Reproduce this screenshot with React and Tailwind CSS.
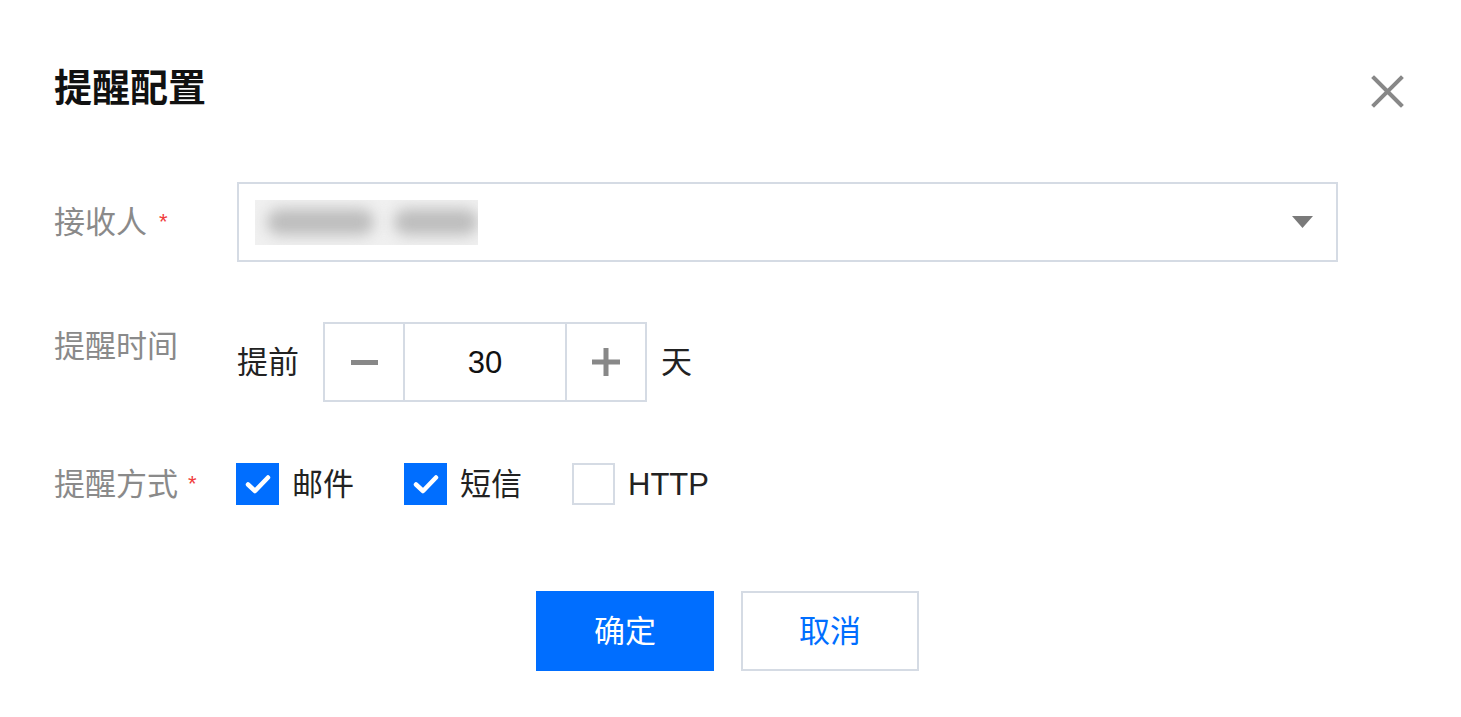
import React, { useState } from 'react';

const font = { fontFamily: '"Liberation Sans", "Noto Sans CJK SC", sans-serif' };

function Checkbox({ checked, label }) {
  return (
    <label className="flex items-center cursor-pointer">
      {checked ? (
        <span className="w-[43px] h-[42px] bg-[#006eff] flex items-center justify-center">
          <svg width="26" height="20" viewBox="0 0 26 20" fill="none">
            <path d="M3 10.5 L10 17 L23 3.5" stroke="#fff" strokeWidth="4.5" strokeLinecap="round" strokeLinejoin="round" />
          </svg>
        </span>
      ) : (
        <span className="w-[43px] h-[42px] border-2 border-[#d5dbe4] bg-white" />
      )}
      <span className="ml-[13px] text-[31px] leading-none text-[#222]">{label}</span>
    </label>
  );
}

export default function App() {
  const [days, setDays] = useState(30);

  return (
    <div className="w-[1461px] h-[717px] bg-white overflow-hidden" style={font}>
      {/* header */}
      <div className="flex items-start justify-between pl-[54px] pr-[57px] pt-[66px]">
        <h2 className="text-[38px] leading-[44px] font-bold text-[#111]">提醒配置</h2>
        <button className="mt-[9px] w-[33px] h-[33px] flex items-center justify-center">
          <svg width="33" height="33" viewBox="0 0 33 33">
            <path d="M3 3 L30 30 M30 3 L3 30" stroke="#888" strokeWidth="4" strokeLinecap="square" />
          </svg>
        </button>
      </div>

      {/* form */}
      <div className="pl-[54px] mt-[72px]">
        <div className="flex items-center h-[80px]">
          <div className="w-[183px] text-[31px] leading-none text-[#8a8a8a] flex items-center">
            接收人<span className="ml-[12px] text-[#f03c3c] text-[22px]">*</span>
          </div>
          <div className="w-[1101px] h-[80px] border-2 border-[#d5dbe4] flex items-center justify-between pl-[16px] pr-[23px]">
            <div className="w-[223px] h-[45px] bg-[#f0f0f0] flex items-center gap-[20px] pl-[12px] overflow-hidden">
              <span className="w-[108px] h-[26px] rounded-full bg-[#bdbdbd] blur-[7px]" />
              <span className="w-[84px] h-[26px] rounded-full bg-[#bdbdbd] blur-[7px]" />
            </div>
            <svg width="21" height="12" viewBox="0 0 21 12">
              <path d="M0 0 H21 L10.5 12 Z" fill="#7a7a7a" />
            </svg>
          </div>
        </div>

        <div className="flex items-start h-[80px] mt-[60px]">
          <div className="w-[183px] pt-[9px] text-[31px] leading-none text-[#8a8a8a]">提醒时间</div>
          <div className="flex items-center h-[80px]">
            <span className="text-[31px] leading-none text-[#222]">提前</span>
            <div className="ml-[24px] flex h-[80px] border-2 border-[#d5dbe4]">
              <button onClick={() => setDays(days - 1)} className="w-[80px] h-full flex items-center justify-center border-r-2 border-[#d5dbe4]">
                <span className="w-[27px] h-[5px] bg-[#888]" />
              </button>
              <div className="w-[160px] h-full flex items-center justify-center text-[31px] leading-none text-[#111]">{days}</div>
              <button onClick={() => setDays(days + 1)} className="w-[80px] h-full flex items-center justify-center border-l-2 border-[#d5dbe4]">
                <svg width="28" height="28" viewBox="0 0 28 28">
                  <path d="M14 0 V28 M0 14 H28" stroke="#888" strokeWidth="5" />
                </svg>
              </button>
            </div>
            <span className="ml-[14px] text-[31px] leading-none text-[#222]">天</span>
          </div>
        </div>

        <div className="flex items-center h-[42px] mt-[61px]">
          <div className="w-[182px] text-[31px] leading-none text-[#8a8a8a] flex items-center">
            提醒方式<span className="ml-[10px] text-[#f03c3c] text-[22px]">*</span>
          </div>
          <div className="flex items-center gap-[50px]">
            <Checkbox checked label="邮件" />
            <Checkbox checked label="短信" />
            <Checkbox label="HTTP" />
          </div>
        </div>
      </div>

      {/* footer */}
      <div className="flex justify-center gap-[27px] pr-[6px] mt-[86px]">
        <button className="w-[178px] h-[80px] bg-[#006eff] text-white text-[31px] leading-none">确定</button>
        <button className="w-[178px] h-[80px] border-2 border-[#d5dbe4] bg-white text-[#006eff] text-[31px] leading-none">取消</button>
      </div>
    </div>
  );
}
